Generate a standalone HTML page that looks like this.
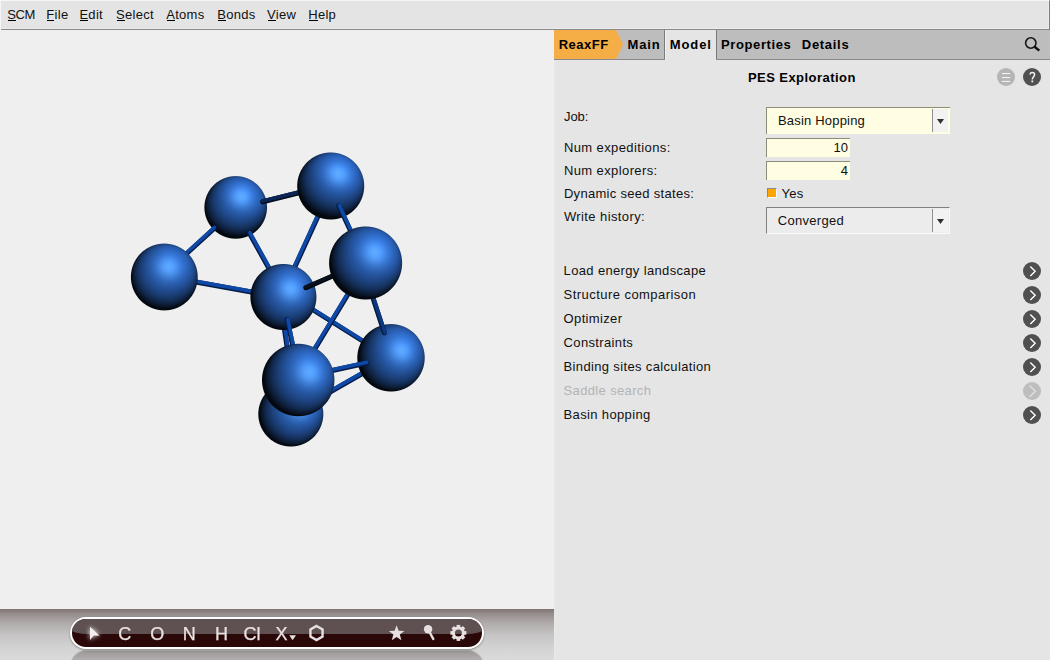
<!DOCTYPE html>
<html><head><meta charset="utf-8">
<style>
*{margin:0;padding:0;box-sizing:border-box}
html,body{width:1050px;height:660px;overflow:hidden;background:#e5e5e5;font-family:"Liberation Sans",sans-serif}
.t{position:absolute;white-space:nowrap;line-height:normal}
.a{position:absolute}
u{text-decoration:none;border-bottom:1px solid #000;}
</style></head><body>
<div class="a" style="left:0;top:0;width:1050px;height:30px;background:#e4e4e4;border-top:1px solid #f6f6f6;border-left:1px solid #f6f6f6;border-right:1px solid #7e7e7e;border-bottom:1px solid #8a8a8a;box-shadow:inset -1px -1px 0 #ebebeb"></div>
<div class="a" style="left:0;top:29px;width:1px;height:1px;background:#f6f6f6"></div>
<div class="t" style="left:7.2px;top:6.84px;font-size:13px;letter-spacing:-0.4px;color:#101010;">SCM</div>
<div class="t" style="left:46.3px;top:6.84px;font-size:13px;letter-spacing:0.3px;color:#101010;">File</div>
<div class="t" style="left:79.4px;top:6.84px;font-size:13px;letter-spacing:0.3px;color:#101010;">Edit</div>
<div class="t" style="left:116.0px;top:6.84px;font-size:13px;letter-spacing:0.3px;color:#101010;">Select</div>
<div class="t" style="left:166.2px;top:6.84px;font-size:13px;letter-spacing:0.3px;color:#101010;">Atoms</div>
<div class="t" style="left:217.3px;top:6.84px;font-size:13px;letter-spacing:0.3px;color:#101010;">Bonds</div>
<div class="t" style="left:267.0px;top:6.84px;font-size:13px;letter-spacing:0.3px;color:#101010;">View</div>
<div class="t" style="left:308.2px;top:6.84px;font-size:13px;letter-spacing:0.3px;color:#101010;">Help</div>
<div class="a" style="left:8px;top:20px;width:8px;height:1px;background:#000"></div>
<div class="a" style="left:47px;top:20px;width:7px;height:1px;background:#000"></div>
<div class="a" style="left:80px;top:20px;width:8px;height:1px;background:#000"></div>
<div class="a" style="left:117px;top:20px;width:8px;height:1px;background:#000"></div>
<div class="a" style="left:167px;top:20px;width:8px;height:1px;background:#000"></div>
<div class="a" style="left:218px;top:20px;width:8px;height:1px;background:#000"></div>
<div class="a" style="left:268px;top:20px;width:8px;height:1px;background:#000"></div>
<div class="a" style="left:309px;top:20px;width:9px;height:1px;background:#000"></div>
<div class="a" style="left:0;top:30px;width:554px;height:579px;background:#efefef"></div>
<div class="a" style="left:554px;top:30px;width:1px;height:630px;background:#e8e8e8"></div>
<div class="a" style="left:0;top:609px;width:554px;height:51px;background:linear-gradient(#7f7373 0px,#948a8a 4px,#b0abab 14px,#c6c4c4 26px,#d4d4d4 40px,#dadada 51px)"></div>
<div class="a" style="left:70px;top:650px;width:414px;height:16px;border-radius:16px 16px 0 0;background:linear-gradient(#8e8888,#a29d9d 3px,#b3afaf 10px);box-shadow:inset 0 1px 1px rgba(255,255,255,.35)"></div>
<div class="a" style="left:70px;top:617px;width:414px;height:32px;border-radius:16px;background:#fff;box-shadow:0 1px 2px rgba(0,0,0,.35)"></div>
<div class="a" style="left:72px;top:619px;width:410px;height:28px;border-radius:14px;overflow:hidden;background:#2b0808"><div class="a" style="left:0;top:0;width:410px;height:14.5px;background:#5f5151;border-radius:0 0 16px 16px/0 0 4px 4px"></div></div>
<div class="a" style="left:555px;top:30px;width:495px;height:29px;background:#bdbdbd"></div>
<div class="a" style="left:554px;top:59px;width:496px;height:1px;background:#8a8a8a"></div>
<svg class="a" style="left:554px;top:30px" width="70" height="30"><polygon points="0,0 62,0 69,14.5 62,29 0,29" fill="#f5ad45"/></svg>
<div class="a" style="left:664px;top:30px;width:1px;height:29px;background:#7a7a7a"></div>
<div class="a" style="left:665px;top:30px;width:51px;height:30px;background:#e5e5e5;border-left:1px solid #f2f2f2"></div>
<div class="a" style="left:716px;top:30px;width:1px;height:29px;background:#7a7a7a"></div>
<div class="t" style="left:558.7px;top:36.94px;font-size:13px;font-weight:bold;letter-spacing:0.5px;color:#000;">ReaxFF</div>
<div class="t" style="left:627.5px;top:36.94px;font-size:13px;font-weight:bold;letter-spacing:0.9px;color:#000;">Main</div>
<div class="t" style="left:669.8px;top:36.94px;font-size:13px;font-weight:bold;letter-spacing:0.9px;color:#000;">Model</div>
<div class="t" style="left:721.1px;top:36.94px;font-size:13px;font-weight:bold;letter-spacing:0.6px;color:#000;">Properties</div>
<div class="t" style="left:801.8px;top:36.94px;font-size:13px;font-weight:bold;letter-spacing:0.7px;color:#000;">Details</div>
<svg class="a" style="left:1020px;top:33px" width="26" height="24"><circle cx="10.8" cy="10" r="5.2" fill="none" stroke="#151515" stroke-width="1.6"/><line x1="14.6" y1="13.8" x2="19.3" y2="17.6" stroke="#111" stroke-width="2.4"/></svg>
<div class="t" style="left:747.9px;top:70.03px;font-size:13px;font-weight:bold;letter-spacing:0.45px;color:#000;">PES Exploration</div>
<svg class="a" style="left:994px;top:65px" width="50" height="24"><circle cx="12" cy="12" r="9" fill="#b5b5b5"/><rect x="8" y="8" width="8.2" height="1.1" fill="#f2f2f2"/><rect x="8" y="12" width="8.2" height="1.1" fill="#f2f2f2"/><rect x="8" y="15.9" width="8.2" height="1.1" fill="#f2f2f2"/><circle cx="38" cy="12" r="9" fill="#505050"/><path d="M36.1,9.6 C36.1,6.7 40.6,6.7 40.6,9.6 C40.6,11.6 38.3,12.0 38.3,14.6" fill="none" stroke="#f4f4f4" stroke-width="1.5"/><rect x="37.4" y="15.5" width="1.8" height="1.8" fill="#f4f4f4"/></svg>
<div class="t" style="left:563.9px;top:109.14px;font-size:13px;letter-spacing:0.0px;color:#111;">Job:</div>
<div class="t" style="left:563.9px;top:140.24px;font-size:13px;letter-spacing:0.4px;color:#111;">Num expeditions:</div>
<div class="t" style="left:563.9px;top:162.94px;font-size:13px;letter-spacing:0.4px;color:#111;">Num explorers:</div>
<div class="t" style="left:563.9px;top:186.13px;font-size:13px;letter-spacing:0.3px;color:#111;">Dynamic seed states:</div>
<div class="t" style="left:563.9px;top:208.94px;font-size:13px;letter-spacing:0.4px;color:#111;">Write history:</div>
<div class="a" style="left:766px;top:107px;width:184px;height:27px;background:#fffde2;border-top:1px solid #8c8c78;border-left:1px solid #8c8c78"></div>
<div class="a" style="left:932px;top:109px;width:1px;height:23px;background:#909090"></div>
<div class="a" style="left:933px;top:109px;width:15px;height:23px;background:#f2f2f2"></div>
<svg class="a" style="left:936px;top:118px" width="10" height="8"><polygon points="1,1 8,1 4.5,6" fill="#303030"/></svg>
<div class="t" style="left:777.9px;top:112.73px;font-size:13px;letter-spacing:0.2px;color:#111;">Basin Hopping</div>
<div class="a" style="left:766px;top:138px;width:84px;height:19px;background:#fffde2;border-top:1px solid #8c8c78;border-left:1px solid #8c8c78"></div>
<div class="a" style="left:766px;top:161px;width:84px;height:19px;background:#fffde2;border-top:1px solid #8c8c78;border-left:1px solid #8c8c78"></div>
<div class="t" style="left:760px;top:140.2px;width:88px;text-align:right;font-size:13px;color:#111">10</div>
<div class="t" style="left:760px;top:163.2px;width:88px;text-align:right;font-size:13px;color:#111">4</div>
<div class="a" style="left:767px;top:188px;width:10px;height:10px;background:#ffa500;border-top:1px solid #8a8a8a;border-left:1px solid #8a8a8a;border-right:1px solid #fafafa;border-bottom:1px solid #fafafa"></div>
<div class="t" style="left:781.5px;top:185.54px;font-size:13px;letter-spacing:0.3px;color:#111;">Yes</div>
<div class="a" style="left:766px;top:207px;width:184px;height:27px;background:#ececec;border-top:1px solid #808080;border-left:1px solid #808080;border-bottom:1px solid #fafafa;border-right:1px solid #fafafa"></div>
<div class="a" style="left:932px;top:209px;width:1px;height:23px;background:#909090"></div>
<div class="a" style="left:933px;top:209px;width:15px;height:23px;background:#f2f2f2"></div>
<svg class="a" style="left:936px;top:218px" width="10" height="8"><polygon points="1,1 8,1 4.5,6" fill="#303030"/></svg>
<div class="t" style="left:777.8px;top:212.94px;font-size:13px;letter-spacing:0.3px;color:#111;">Converged</div>
<div class="t" style="left:563.6px;top:263.04px;font-size:13px;letter-spacing:0.35px;color:#111;">Load energy landscape</div>
<svg class="a" style="left:1022px;top:260.8px" width="20" height="20"><circle cx="10" cy="10" r="9" fill="#505050"/><polyline points="8.3,5.5 13.2,10.2 8.3,14.9" fill="none" stroke="#fff" stroke-width="1.4"/></svg>
<div class="t" style="left:563.6px;top:287.04px;font-size:13px;letter-spacing:0.45px;color:#111;">Structure comparison</div>
<svg class="a" style="left:1022px;top:284.8px" width="20" height="20"><circle cx="10" cy="10" r="9" fill="#505050"/><polyline points="8.3,5.5 13.2,10.2 8.3,14.9" fill="none" stroke="#fff" stroke-width="1.4"/></svg>
<div class="t" style="left:563.6px;top:311.04px;font-size:13px;letter-spacing:0.35px;color:#111;">Optimizer</div>
<svg class="a" style="left:1022px;top:308.8px" width="20" height="20"><circle cx="10" cy="10" r="9" fill="#505050"/><polyline points="8.3,5.5 13.2,10.2 8.3,14.9" fill="none" stroke="#fff" stroke-width="1.4"/></svg>
<div class="t" style="left:563.6px;top:335.04px;font-size:13px;letter-spacing:0.35px;color:#111;">Constraints</div>
<svg class="a" style="left:1022px;top:332.8px" width="20" height="20"><circle cx="10" cy="10" r="9" fill="#505050"/><polyline points="8.3,5.5 13.2,10.2 8.3,14.9" fill="none" stroke="#fff" stroke-width="1.4"/></svg>
<div class="t" style="left:563.6px;top:359.04px;font-size:13px;letter-spacing:0.35px;color:#111;">Binding sites calculation</div>
<svg class="a" style="left:1022px;top:356.8px" width="20" height="20"><circle cx="10" cy="10" r="9" fill="#505050"/><polyline points="8.3,5.5 13.2,10.2 8.3,14.9" fill="none" stroke="#fff" stroke-width="1.4"/></svg>
<div class="t" style="left:563.6px;top:383.04px;font-size:13px;letter-spacing:0.35px;color:#b4b4b4;">Saddle search</div>
<svg class="a" style="left:1022px;top:380.8px" width="20" height="20"><circle cx="10" cy="10" r="9" fill="#bdbdbd"/><polyline points="7.4,4.4 13.4,10.2 7.4,16" fill="none" stroke="#e0e0e0" stroke-width="1.4"/></svg>
<div class="t" style="left:563.6px;top:407.04px;font-size:13px;letter-spacing:0.35px;color:#111;">Basin hopping</div>
<svg class="a" style="left:1022px;top:404.8px" width="20" height="20"><circle cx="10" cy="10" r="9" fill="#505050"/><polyline points="8.3,5.5 13.2,10.2 8.3,14.9" fill="none" stroke="#fff" stroke-width="1.4"/></svg>
<svg class="a" style="left:0;top:0" width="554" height="609">
<defs><radialGradient id="sph" cx="0.57" cy="0.42" r="0.6" fx="0.6" fy="0.36"><stop offset="0" stop-color="#5da0f8"/><stop offset="0.25" stop-color="#3a76cc"/><stop offset="0.5" stop-color="#2a5ea8"/><stop offset="0.72" stop-color="#1c4280"/><stop offset="0.88" stop-color="#0e2446"/><stop offset="1" stop-color="#060a12"/></radialGradient></defs>
<line x1="193.00" y1="281.50" x2="254.00" y2="292.50" stroke="#061c46" stroke-width="5.0" stroke-linecap="round"/><line x1="193.12" y1="280.81" x2="254.12" y2="291.81" stroke="#0e49a8" stroke-width="3.6" stroke-linecap="round"/>
<line x1="320.00" y1="212.00" x2="293.00" y2="271.00" stroke="#061c46" stroke-width="5.0" stroke-linecap="round"/><line x1="319.36" y1="211.71" x2="292.36" y2="270.71" stroke="#0e49a8" stroke-width="3.6" stroke-linecap="round"/>
<line x1="314.00" y1="310.50" x2="365.00" y2="342.50" stroke="#061c46" stroke-width="5.0" stroke-linecap="round"/><line x1="314.37" y1="309.91" x2="365.37" y2="341.91" stroke="#0e49a8" stroke-width="3.6" stroke-linecap="round"/>
<line x1="350.00" y1="291.00" x2="313.00" y2="352.00" stroke="#061c46" stroke-width="5.0" stroke-linecap="round"/><line x1="349.40" y1="290.64" x2="312.40" y2="351.64" stroke="#0e49a8" stroke-width="3.6" stroke-linecap="round"/>
<line x1="283.80" y1="325.00" x2="287.50" y2="350.00" stroke="#061c46" stroke-width="5.0" stroke-linecap="round"/><line x1="284.49" y1="324.90" x2="288.19" y2="349.90" stroke="#0e49a8" stroke-width="3.6" stroke-linecap="round"/>
<line x1="330.00" y1="392.00" x2="365.00" y2="372.00" stroke="#061c46" stroke-width="5.0" stroke-linecap="round"/><line x1="329.65" y1="391.39" x2="364.65" y2="371.39" stroke="#0e49a8" stroke-width="3.6" stroke-linecap="round"/>
</svg>
<svg class="a" style="left:203px;top:175px" width="66" height="66"><circle cx="32.69999999999999" cy="32.400000000000006" r="30.5" fill="url(#sph)"/></svg>
<canvas class="a atom" style="left:203px;top:175px" width="66" height="66" data-cx="32.69999999999999" data-cy="32.400000000000006" data-r="31.3" data-hx="0.17" data-hy="-0.33"></canvas>
<svg class="a" style="left:0;top:0" width="554" height="609"><line x1="262.80" y1="201.80" x2="302.00" y2="192.00" stroke="#040c1c" stroke-width="5.0" stroke-linecap="round"/><line x1="262.63" y1="201.12" x2="301.83" y2="191.32" stroke="#0b2656" stroke-width="3.6" stroke-linecap="round"/><line x1="214.70" y1="228.00" x2="184.00" y2="256.00" stroke="#061c46" stroke-width="5.0" stroke-linecap="round"/><line x1="214.23" y1="227.48" x2="183.53" y2="255.48" stroke="#0e49a8" stroke-width="3.6" stroke-linecap="round"/><line x1="249.30" y1="233.00" x2="271.00" y2="272.00" stroke="#061c46" stroke-width="5.0" stroke-linecap="round"/><line x1="249.91" y1="232.66" x2="271.61" y2="271.66" stroke="#0e49a8" stroke-width="3.6" stroke-linecap="round"/></svg>
<svg class="a" style="left:296px;top:151px" width="71" height="71"><circle cx="34.69999999999999" cy="35" r="32.7" fill="url(#sph)"/></svg>
<canvas class="a atom" style="left:296px;top:151px" width="71" height="71" data-cx="34.69999999999999" data-cy="35" data-r="33.5" data-hx="0.22" data-hy="-0.35"></canvas>
<svg class="a" style="left:0;top:0" width="554" height="609"><line x1="338.80" y1="205.80" x2="352.00" y2="234.00" stroke="#061c46" stroke-width="5.0" stroke-linecap="round"/><line x1="339.43" y1="205.50" x2="352.63" y2="233.70" stroke="#0e49a8" stroke-width="3.6" stroke-linecap="round"/></svg>
<svg class="a" style="left:249px;top:263px" width="70" height="70"><circle cx="34.39999999999998" cy="34" r="32.2" fill="url(#sph)"/></svg>
<canvas class="a atom" style="left:249px;top:263px" width="70" height="70" data-cx="34.39999999999998" data-cy="34" data-r="33" data-hx="0.21" data-hy="-0.23"></canvas>
<svg class="a" style="left:0;top:0" width="554" height="609"><line x1="305.90" y1="287.70" x2="335.00" y2="275.00" stroke="#03060c" stroke-width="5.0" stroke-linecap="round"/><line x1="305.62" y1="287.06" x2="334.72" y2="274.36" stroke="#08111e" stroke-width="3.6" stroke-linecap="round"/><line x1="287.10" y1="319.40" x2="293.00" y2="347.00" stroke="#061c46" stroke-width="5.0" stroke-linecap="round"/><line x1="287.78" y1="319.25" x2="293.68" y2="346.85" stroke="#0e49a8" stroke-width="3.6" stroke-linecap="round"/></svg>
<svg class="a" style="left:129px;top:242px" width="70" height="70"><circle cx="35.30000000000001" cy="35" r="32.6" fill="url(#sph)"/></svg>
<canvas class="a atom" style="left:129px;top:242px" width="70" height="70" data-cx="35.30000000000001" data-cy="35" data-r="33.4" data-hx="0.12" data-hy="-0.29"></canvas>
<svg class="a" style="left:356px;top:323px" width="71" height="71"><circle cx="35" cy="34.80000000000001" r="32.900000000000006" fill="url(#sph)"/></svg>
<canvas class="a atom" style="left:356px;top:323px" width="71" height="71" data-cx="35" data-cy="34.80000000000001" data-r="33.7" data-hx="0.3" data-hy="-0.2"></canvas>
<svg class="a" style="left:0;top:0" width="554" height="609"><line x1="384.30" y1="332.80" x2="372.00" y2="295.00" stroke="#05183a" stroke-width="5.0" stroke-linecap="round"/><line x1="384.97" y1="332.58" x2="372.67" y2="294.78" stroke="#0b3880" stroke-width="3.6" stroke-linecap="round"/><line x1="367.00" y1="363.00" x2="330.00" y2="371.00" stroke="#061c46" stroke-width="5.0" stroke-linecap="round"/><line x1="366.85" y1="362.32" x2="329.85" y2="370.32" stroke="#0e49a8" stroke-width="3.6" stroke-linecap="round"/></svg>
<svg class="a" style="left:257px;top:380px" width="69" height="69"><circle cx="33.80000000000001" cy="34" r="31.7" fill="url(#sph)"/></svg>
<canvas class="a atom" style="left:257px;top:380px" width="69" height="69" data-cx="33.80000000000001" data-cy="34" data-r="32.5" data-hx="0.25" data-hy="-0.2"></canvas>
<svg class="a" style="left:328px;top:225px" width="77" height="77"><circle cx="37.60000000000002" cy="38" r="35.7" fill="url(#sph)"/></svg>
<canvas class="a atom" style="left:328px;top:225px" width="77" height="77" data-cx="37.60000000000002" data-cy="38" data-r="36.5" data-hx="0.25" data-hy="-0.27"></canvas>
<svg class="a" style="left:261px;top:342px" width="76" height="76"><circle cx="37.19999999999999" cy="38" r="35.400000000000006" fill="url(#sph)"/></svg>
<canvas class="a atom" style="left:261px;top:342px" width="76" height="76" data-cx="37.19999999999999" data-cy="38" data-r="36.2" data-hx="0.3" data-hy="-0.2"></canvas>
<script>
(function(){
 function norm(v){var l=Math.hypot(v[0],v[1],v[2]);return [v[0]/l,v[1]/l,v[2]/l];}
 var base=[0.16,0.37,0.70];
 var cs=document.querySelectorAll('canvas.atom');
 for(var i=0;i<cs.length;i++){
  var c=cs[i],ctx=c.getContext('2d'),W=c.width,Hh=c.height;
  var cx=+c.dataset.cx,cy=+c.dataset.cy,r=+c.dataset.r,hx=+c.dataset.hx,hy=+c.dataset.hy;
  var hz=Math.sqrt(1-hx*hx-hy*hy);
  var L1=[hx,hy,hz];
  var H1=L1;
  var L3=norm([0.55,-0.8,0.2]);
  var img=ctx.createImageData(W,Hh),d=img.data;
  for(var y=0;y<Hh;y++)for(var x=0;x<W;x++){
   var px=x+0.5-cx,py=y+0.5-cy,dist=Math.hypot(px,py);
   var a=Math.max(0,Math.min(1,r-dist+0.5));
   if(a<=0)continue;
   var nx=px/r,ny=py/r,q=1-nx*nx-ny*ny; if(q<0)q=0; var nz=Math.sqrt(q);
   var df1=Math.max(0,nx*L1[0]+ny*L1[1]+nz*L1[2]);
   var sp=Math.pow(Math.max(0,nx*H1[0]+ny*H1[1]+nz*H1[2]),16);
   var df3=Math.max(0,nx*L3[0]+ny*L3[1]+nz*L3[2]);
   var I=0.08+1.0*Math.pow(df1,1.2)+0.3*Math.pow(df3,1.5);
   var j=(y*W+x)*4;
   d[j]=Math.min(255,255*(base[0]*I+0.22*sp*0.75));
   d[j+1]=Math.min(255,255*(base[1]*I+0.22*sp*1.0));
   d[j+2]=Math.min(255,255*(base[2]*I+0.22*sp*0.9));
   d[j+3]=255*a;
  }
  ctx.putImageData(img,0,0);
 }
})();
</script>
<svg class="a" style="left:70px;top:617px" width="414" height="33"><defs><filter id="gl" x="-1" y="-1" width="3" height="3"><feGaussianBlur stdDeviation="2.8"/></filter></defs><polygon points="20,9.8 29.7,18.7 23.8,18.5 20,23" fill="#fff" opacity="1" filter="url(#gl)"/><polygon points="20,9.8 29.7,18.7 23.8,18.5 20,23" fill="#f4f0f0"/><polygon points="326.60,8.30 328.60,13.75 334.40,13.97 329.83,17.55 331.42,23.13 326.60,19.90 321.78,23.13 323.37,17.55 318.80,13.97 324.60,13.75" fill="#e6e0e0"/><circle cx="358.1" cy="12.3" r="4.2" fill="#e6e0e0"/><line x1="359" y1="14" x2="363.3" y2="22" stroke="#e6e0e0" stroke-width="2.4" stroke-linecap="round"/><rect x="386.60" y="7.90" width="3.6" height="4" fill="#e6e0e0" transform="rotate(0 388.4 15.9)"/><rect x="386.60" y="7.90" width="3.6" height="4" fill="#e6e0e0" transform="rotate(45 388.4 15.9)"/><rect x="386.60" y="7.90" width="3.6" height="4" fill="#e6e0e0" transform="rotate(90 388.4 15.9)"/><rect x="386.60" y="7.90" width="3.6" height="4" fill="#e6e0e0" transform="rotate(135 388.4 15.9)"/><rect x="386.60" y="7.90" width="3.6" height="4" fill="#e6e0e0" transform="rotate(180 388.4 15.9)"/><rect x="386.60" y="7.90" width="3.6" height="4" fill="#e6e0e0" transform="rotate(225 388.4 15.9)"/><rect x="386.60" y="7.90" width="3.6" height="4" fill="#e6e0e0" transform="rotate(270 388.4 15.9)"/><rect x="386.60" y="7.90" width="3.6" height="4" fill="#e6e0e0" transform="rotate(315 388.4 15.9)"/><circle cx="388.4" cy="15.9" r="5" fill="none" stroke="#e6e0e0" stroke-width="3"/><polygon points="246.50,9.00 252.56,12.50 252.56,19.50 246.50,23.00 240.44,19.50 240.44,12.50" fill="none" stroke="#e6e0e0" stroke-width="2.4"/><polygon points="219.3,18.3 226,18.3 222.6,23.3" fill="#e6e0e0"/></svg>
<div class="t" style="left:118.3px;top:623.91px;font-size:18px;letter-spacing:0.0px;color:#e8e2e2;-webkit-text-stroke:0.25px #e8e2e2;">C</div>
<div class="t" style="left:150.3px;top:623.91px;font-size:18px;letter-spacing:0.0px;color:#e8e2e2;-webkit-text-stroke:0.25px #e8e2e2;">O</div>
<div class="t" style="left:182.8px;top:623.91px;font-size:18px;letter-spacing:0.0px;color:#e8e2e2;-webkit-text-stroke:0.25px #e8e2e2;">N</div>
<div class="t" style="left:215.1px;top:623.91px;font-size:18px;letter-spacing:0.0px;color:#e8e2e2;-webkit-text-stroke:0.25px #e8e2e2;">H</div>
<div class="t" style="left:243.4px;top:623.91px;font-size:18px;letter-spacing:0.0px;color:#e8e2e2;-webkit-text-stroke:0.25px #e8e2e2;">Cl</div>
<div class="t" style="left:275.4px;top:623.91px;font-size:18px;letter-spacing:0.0px;color:#e8e2e2;-webkit-text-stroke:0.25px #e8e2e2;">X</div>
</body></html>
